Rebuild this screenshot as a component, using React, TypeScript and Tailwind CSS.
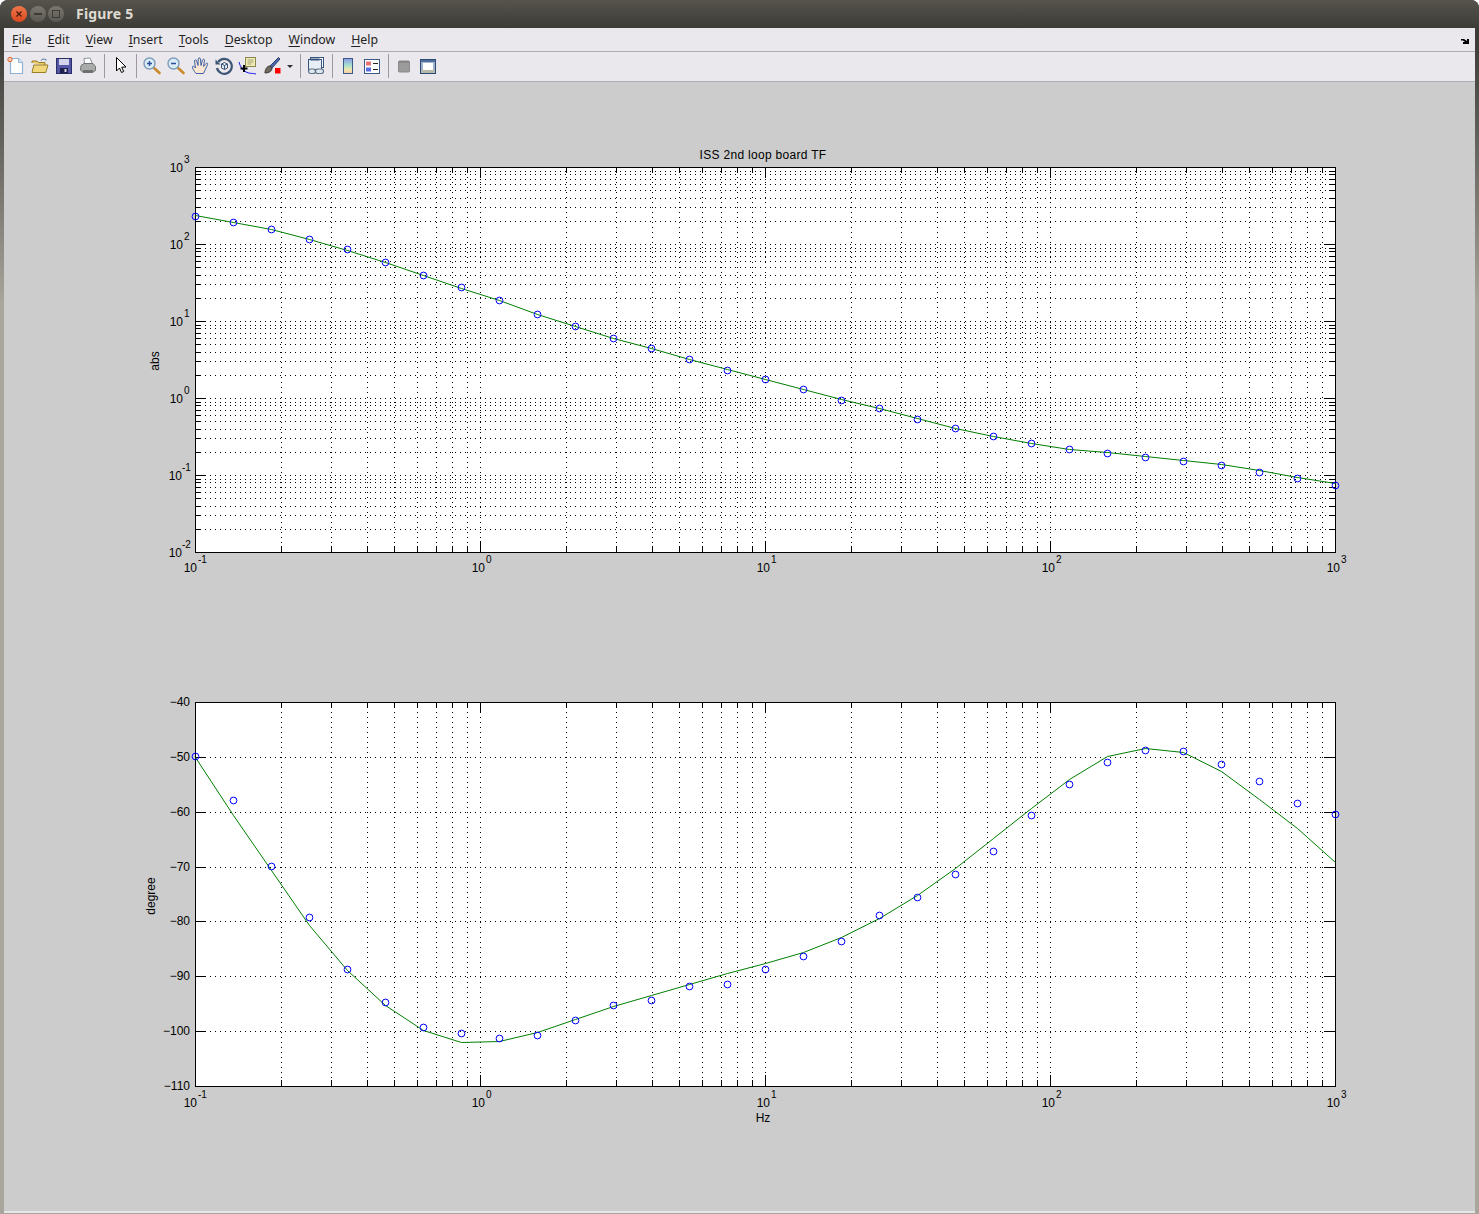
import React from 'react'

// 31 samples, evenly spaced on the log x axis
const sampleX = Array.from({ length: 31 }, (_, i) => 195 + i * 38)

const magMeasured = [216, 222, 229, 239, 249, 262, 275, 287, 300, 314, 326, 338, 348, 359, 370, 379, 389, 400, 408, 419, 428, 436, 443, 449, 453, 457, 461, 465, 472, 478, 485]
const magFit = [215, 222, 229, 239, 250, 262, 275, 288, 300, 314, 326, 338, 348, 359, 369, 379, 389, 399, 408, 418, 428, 436, 443, 449, 452, 456, 460, 464, 470, 477, 483]
const phaseMeasured = [756, 800, 866, 917, 969, 1002, 1027, 1033, 1038, 1035, 1020, 1005, 1000, 986, 984, 969, 956, 941, 915, 897, 874, 851, 815, 784, 762, 750, 751, 764, 781, 803, 814]
const phaseFit = [757, 815, 870, 925, 970, 1005, 1030, 1042, 1041, 1032, 1019, 1006, 995, 984, 973, 963, 952, 937, 918, 895, 868, 838, 808, 779, 756, 748, 752, 771, 799, 828, 862]

const LEFT = 195
const RIGHT = 1335
const DECADE = 285
const xDecades = [0, 1, 2, 3, 4].map(i => LEFT + i * DECADE)
const xMinors = [0, 1, 2, 3].flatMap(d =>
  [2, 3, 4, 5, 6, 7, 8, 9].map(m => Math.round(LEFT + (d + Math.log10(m)) * DECADE))
)

function Frame({ top, bottom, yMajor, yMinor }: { top: number; bottom: number; yMajor: number[]; yMinor: number[] }) {
  return (
    <g shapeRendering="crispEdges" stroke="#000" fill="none">
      {[...xDecades.slice(1, -1), ...xMinors].map(x => (
        <line key={x} x1={x + 0.5} x2={x + 0.5} y1={top} y2={bottom} strokeDasharray="1 4" />
      ))}
      {[...yMajor, ...yMinor].map(y => (
        <line key={y} x1={LEFT} x2={RIGHT} y1={y + 0.5} y2={y + 0.5} strokeDasharray="1 4" />
      ))}
      {xDecades.map(x => (
        <path key={x} d={`M${x + 0.5} ${bottom}v-11M${x + 0.5} ${top}v11`} />
      ))}
      {xMinors.map(x => (
        <path key={x} d={`M${x + 0.5} ${bottom}v-6M${x + 0.5} ${top}v6`} />
      ))}
      {yMajor.map(y => (
        <path key={y} d={`M${LEFT} ${y + 0.5}h11M${RIGHT} ${y + 0.5}h-11`} />
      ))}
      {yMinor.map(y => (
        <path key={y} d={`M${LEFT} ${y + 0.5}h6M${RIGHT} ${y + 0.5}h-6`} />
      ))}
      <rect x={LEFT + 0.5} y={top + 0.5} width={RIGHT - LEFT} height={bottom - top} />
    </g>
  )
}

function Traces({ measured, fit }: { measured: number[]; fit: number[] }) {
  return (
    <g fill="none">
      <polyline points={sampleX.map((x, i) => `${x + 0.5},${fit[i] + 0.5}`).join(' ')} stroke="#007f00" strokeWidth="1" />
      {sampleX.map((x, i) => (
        <circle key={x} cx={x + 0.5} cy={measured[i] + 0.5} r="3.4" stroke="#0000ff" strokeWidth="1" />
      ))}
    </g>
  )
}

function XLabels({ baseline }: { baseline: number }) {
  const exps = ['-1', '0', '1', '2', '3']
  return (
    <>
      {xDecades.map((x, i) => {
        const end = i === 0 ? x + 2 : x + 5
        return (
          <g key={x}>
            <text x={end} y={baseline} textAnchor="end" fontSize="12">10</text>
            <text x={end + 1} y={baseline - 9} fontSize="10">{exps[i]}</text>
          </g>
        )
      })}
    </>
  )
}

function MagnitudePlot() {
  const yMajor = [167, 244, 321, 398, 475, 552]
  const yMinor = [0, 1, 2, 3, 4].flatMap(d =>
    [2, 3, 4, 5, 6, 7, 8, 9].map(m => Math.round(552 - (d + Math.log10(m)) * 77))
  )
  const exps = ['3', '2', '1', '0', '-1', '-2']
  return (
    <svg viewBox="134 140 1230 450" width="1230" height="450" className="block ml-[130px] mt-[58px] font-['Liberation_Sans',sans-serif]">
      <rect x={LEFT} y={167} width={RIGHT - LEFT} height={385} fill="#fff" />
      <Frame top={167} bottom={552} yMajor={yMajor} yMinor={yMinor} />
      <Traces measured={magMeasured} fit={magFit} />
      <text x="763" y="159" textAnchor="middle" fontSize="12" letterSpacing="0.3">ISS 2nd loop board TF</text>
      {yMajor.map((y, i) => (
        <g key={y}>
          <text x={i === 5 || i === 4 ? 182 : 183} y={y + 5} textAnchor="end" fontSize="12">10</text>
          <text x={i === 5 || i === 4 ? 182 : 184} y={y - 4} fontSize="10">{exps[i]}</text>
        </g>
      ))}
      <XLabels baseline={572} />
      <text transform="translate(159 361) rotate(-90)" textAnchor="middle" fontSize="12">abs</text>
    </svg>
  )
}

function PhasePlot() {
  const values = [-40, -50, -60, -70, -80, -90, -100, -110]
  const ys = values.map((_, i) => Math.round(702 + i * 54.86))
  return (
    <svg viewBox="134 680 1230 450" width="1230" height="450" className="block ml-[130px] mt-[90px] font-['Liberation_Sans',sans-serif]">
      <rect x={LEFT} y={702} width={RIGHT - LEFT} height={384} fill="#fff" />
      <Frame top={702} bottom={1086} yMajor={ys} yMinor={[]} />
      <Traces measured={phaseMeasured} fit={phaseFit} />
      {values.map((v, i) => (
        <text key={v} x="190" y={ys[i] + 4} textAnchor="end" fontSize="12">{`\u2212${Math.abs(v)}`}</text>
      ))}
      <XLabels baseline={1107} />
      <text x="763" y="1122" textAnchor="middle" fontSize="12">Hz</text>
      <text transform="translate(155 896) rotate(-90)" textAnchor="middle" fontSize="12">degree</text>
    </svg>
  )
}

const menus: [string, string][] = [
  ['F', 'ile'], ['E', 'dit'], ['V', 'iew'], ['I', 'nsert'], ['T', 'ools'], ['D', 'esktop'], ['W', 'indow'], ['H', 'elp'],
]

function Icon({ children }: { children: React.ReactNode }) {
  return (
    <div className="w-6 h-[22px] flex items-center justify-center">
      <svg width="20" height="20" viewBox="0 0 20 20" fill="none">{children}</svg>
    </div>
  )
}

function Sep() {
  return <div className="w-2 h-6 flex justify-center"><div className="w-px h-full bg-[#9c9aa0]" /></div>
}

const Magnifier = ({ minus }: { minus?: boolean }) => (
  <>
    <path d="M11.5 11.5L17.5 17" stroke="#c98a2c" strokeWidth="2.6" strokeLinecap="round" />
    <circle cx="7.5" cy="7.5" r="5.5" fill="#dcecf6" stroke="#7d9db8" strokeWidth="1.4" />
    <path d={minus ? 'M5 7.5h5' : 'M5 7.5h5M7.5 5v5'} stroke="#2a4f9c" strokeWidth="1.4" />
  </>
)

function Toolbar() {
  return (
    <div className="h-[29px] flex items-center bg-[#eae8ed] pb-px">
      <Icon>
        <path d="M4.5 2.5h8l4 4v11h-12z" fill="#fff" stroke="#8db4d6" strokeWidth="1.2" />
        <path d="M12.5 2.5v4h4" fill="#dbe8f3" stroke="#8db4d6" />
        <circle cx="4" cy="3.5" r="2.2" fill="#f6c9a8" stroke="#e0663a" />
      </Icon>
      <Icon>
        <path d="M2 7V5h5l1.5 1.5H15V9" fill="#e8c964" stroke="#9a7f2a" />
        <path d="M2 16.5l1.8-7.5H18l-2.2 7.5z" fill="#f0d77c" stroke="#9a7f2a" />
        <path d="M11 4.5C12.5 2.5 15 2.5 16.5 4.5" stroke="#5b7fa8" strokeWidth="1.2" />
      </Icon>
      <Icon>
        <rect x="2.5" y="2.5" width="15" height="15" fill="#5456a8" stroke="#2c2c66" />
        <rect x="5" y="3" width="10" height="6" fill="#d4d4ec" />
        <rect x="6" y="12" width="8" height="5.5" fill="#20204c" />
        <rect x="10.5" y="13" width="2" height="3" fill="#d8d8e8" />
      </Icon>
      <Icon>
        <path d="M6 2.5l6-.5 2.5 6h-8z" fill="#fff" stroke="#8f9396" />
        <path d="M3 9.5l3-2h9l2.5 3v4l-3 2H5l-2.5-2.5z" fill="#a9abab" stroke="#6f7272" />
        <path d="M5 14h10v2.5H5z" fill="#6d7070" />
      </Icon>
      <Sep />
      <Icon>
        <path d="M6.5 1.5v13.5l3-3 2 4.5 2.2-1-2-4.3 4.3-.2z" fill="#fff" stroke="#000" strokeWidth="1" strokeLinejoin="round" />
      </Icon>
      <Sep />
      <Icon><Magnifier /></Icon>
      <Icon><Magnifier minus /></Icon>
      <Icon>
        <path d="M6 17.5C4 15 2 12 2.5 10.5c.6-1 2 0 3 1.5L4.5 5c0-1.500 1.800-1.500 2.200 0L8 9.500 8.200 3c.2-1.500 2-1.500 2.200 0l.6 6.500L12.500 4c.5-1.300 2.200-1 2 .5L13.500 10.500 16 7.500c1-1 2.200 0 1.500 1.200-1.500 3-2.500 6-4 8.800z" fill="#fce6d2" stroke="#3f63a8" strokeWidth="1" strokeLinejoin="round" />
      </Icon>
      <Icon>
        <path d="M4.200 6A7.500 7.500 0 1 1 3 12" stroke="#3d5675" strokeWidth="2.200" />
        <path d="M1.500 3.500v5h5z" fill="#3d5675" />
        <path d="M7.500 8l3-1.500 3 1.500v4l-3 1.500-3-1.500z" fill="#dfe7ef" stroke="#3d5675" />
        <path d="M7.500 8l3 1.500 3-1.500M10.500 9.500v4" stroke="#3d5675" />
      </Icon>
      <Icon>
        <rect x="7.500" y="1.500" width="10" height="9" fill="#f0ecb4" stroke="#8a8850" />
        <path d="M9.500 4h6M9.500 6h6M9.500 8h4" stroke="#a3a278" />
        <path d="M1 6c1 4 3 8 7 10s7 1 10 2" stroke="#1c1cf0" />
        <path d="M6 9v7M2.500 12.500h7" stroke="#000" strokeWidth="2" />
      </Icon>
      <Icon>
        <path d="M8 10L16.500 1.500l1.500 1.500-8 9z" fill="#4a68a8" stroke="#2c3f70" />
        <path d="M3 17c0-3 1.500-7 5-7l2 2c0 3-3 5-7 5z" fill="#6f6a62" stroke="#3a3732" />
        <rect x="13" y="12" width="5.500" height="5.500" fill="#ff0000" />
      </Icon>
      <div className="w-3 flex justify-center pr-px">
        <svg width="6" height="3" viewBox="0 0 6 3"><path d="M0 0h6L3 3z" fill="#2c2c2c" /></svg>
      </div>
      <Sep />
      <Icon>
        <rect x="4.500" y="1.500" width="13" height="10" fill="#fff" stroke="#35537e" />
        <rect x="2.500" y="3.500" width="13" height="10" fill="#e8eef5" stroke="#35537e" />
        <path d="M4.500 3.500h9" stroke="#35537e" strokeWidth="2" />
        <rect x="2.500" y="13" width="7" height="4.500" rx="2.200" fill="#dfe6ee" stroke="#5e7389" strokeWidth="1.200" />
        <rect x="9.500" y="13" width="8" height="4.500" rx="2.200" fill="#dfe6ee" stroke="#5e7389" strokeWidth="1.200" />
      </Icon>
      <Sep />
      <Icon>
        <defs>
          <linearGradient id="bar" x1="0" y1="0" x2="0" y2="1">
            <stop offset="0" stopColor="#8c9ce8" />
            <stop offset="0.45" stopColor="#a8e0d0" />
            <stop offset="0.75" stopColor="#f0e8a8" />
            <stop offset="1" stopColor="#f4c8b0" />
          </linearGradient>
        </defs>
        <rect x="5.500" y="2.500" width="9" height="15" fill="url(#bar)" stroke="#3c5a88" />
      </Icon>
      <Icon>
        <rect x="2.500" y="3.500" width="15" height="14" fill="#fff" stroke="#3c5a88" />
        <rect x="4" y="5.500" width="5" height="4" fill="#e87070" />
        <rect x="4" y="11.500" width="5" height="4" fill="#5a6ee0" />
        <path d="M11 7.500h5M11 13.500h5" stroke="#222" />
      </Icon>
      <Sep />
      <Icon>
        <rect x="4.500" y="5" width="11" height="11" rx="1" fill="#9b9b9b" stroke="#8a8a8a" />
        <path d="M5 6h10" stroke="#777" />
      </Icon>
      <Icon>
        <rect x="2.500" y="3.500" width="15" height="14" fill="#fff" stroke="#2b4a78" />
        <rect x="3" y="4" width="14" height="2.500" fill="#4f6f9c" />
        <path d="M3 7v7h2V7zM15 7v7h2V7z" fill="#9fb2c8" />
        <rect x="3" y="14" width="14" height="3" fill="#b8b8a8" />
      </Icon>
    </div>
  )
}

export default function App() {
  return (
    <div className="w-[1479px] h-[1214px] bg-white overflow-hidden">
      <div className="h-full flex flex-col rounded-t-lg overflow-hidden bg-gradient-to-b from-[#3c3b37] from-[3%] to-[#a8a59c] to-[25%]">
        <div className="h-7 shrink-0 flex items-center bg-gradient-to-b from-[#55534c] to-[#3d3c37]">
          <div className="flex items-center gap-[2.5px] pl-[11px]">
            <div className="w-4 h-4 rounded-full bg-gradient-to-b from-[#f0764a] to-[#d9481c] flex items-center justify-center">
              <svg width="8" height="8" viewBox="0 0 8 8"><path d="M1.500 1.500l5 5M6.500 1.500l-5 5" stroke="#4a1d0c" strokeWidth="1.400" /></svg>
            </div>
            <div className="w-4 h-4 rounded-full bg-gradient-to-b from-[#7a7870] to-[#5a5850] flex items-center justify-center">
              <div className="w-2 h-0.5 bg-[#3c3b37]" />
            </div>
            <div className="w-4 h-4 rounded-full bg-gradient-to-b from-[#7a7870] to-[#5a5850] flex items-center justify-center">
              <div className="w-2 h-2 border border-[#3c3b37]" />
            </div>
          </div>
          <span className="ml-3 -mt-px text-[14px] font-bold text-[#dfdbd2] tracking-[0.2px] font-['Noto_Sans',sans-serif]">Figure 5</span>
        </div>
        <div className="flex-1 flex flex-col mx-[4px] min-h-0">
          <div className="h-6 shrink-0 flex items-center justify-between bg-[#eae8ed] border-b border-[#aeacb2] pl-2 pr-[6px] pt-0.5 font-['Noto_Sans',sans-serif] text-[12.3px] text-[#222]">
            <div className="flex gap-4">
              {menus.map(([key, rest]) => (
                <span key={key}><u className="underline-offset-2">{key}</u>{rest}</span>
              ))}
            </div>
            <svg width="8" height="6" viewBox="0 0 8 6"><path d="M0 1h3l3 2V1h2v5H2V4h2L2 2.500 0 2.500z" fill="#000" /></svg>
          </div>
          <Toolbar />
          <div className="flex-1 min-h-0 bg-[#cccccc] border-t border-[#aeacb2]">
            <MagnitudePlot />
            <PhasePlot />
          </div>
          <div className="h-[2px] shrink-0 bg-[#e6e6e6]" />
          <div className="h-px shrink-0" />
        </div>
      </div>
    </div>
  )
}
